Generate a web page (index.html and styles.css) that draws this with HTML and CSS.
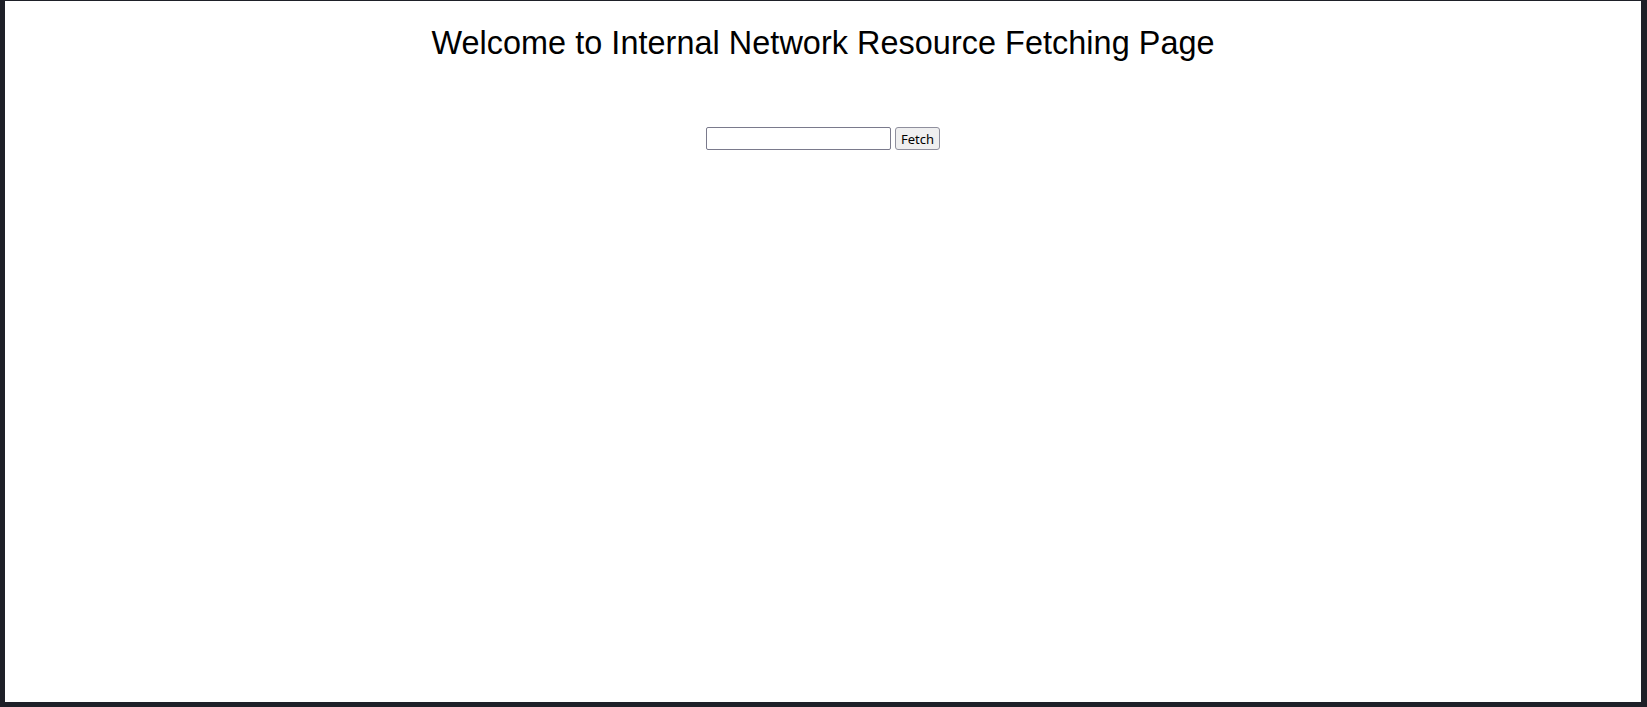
FILE: index.html
```html
<!DOCTYPE html>
<html lang="en">
<head>
<meta charset="utf-8">
<title>Internal Network Resource Fetching</title>
<link rel="stylesheet" href="styles.css">
</head>
<body>
<div class="page">
  <h1 class="title">Welcome to Internal Network Resource Fetching Page</h1>
  <form class="fetch-form">
    <input class="url-input" type="text" name="url">
    <button class="fetch-btn" type="button">Fetch</button>
  </form>
</div>
</body>
</html>
```

FILE: styles.css
```css
html, body {
  margin: 0;
  padding: 0;
  height: 100%;
}
body {
  background: #1e2028;
  padding: 1px 6px 5px 5px;
  box-sizing: border-box;
  display: flex;
}
.page {
  flex: 1;
  background: #ffffff;
  display: flex;
  flex-direction: column;
  align-items: center;
  font-family: "Liberation Sans", Arial, sans-serif;
}
.title {
  margin: 24px 0 0;
  font-size: 32.4px;
  font-weight: normal;
  color: #000;
  line-height: 37px;
  letter-spacing: 0.05px;
}
.fetch-form {
  margin-top: 65px;
  display: flex;
  align-items: center;
  gap: 4px;
}
.url-input {
  width: 179px;
  height: 19px;
  box-sizing: content-box;
  padding: 1px 2px;
  border: 1px solid #7a7a8c;
  border-radius: 2px;
  margin: 0;
}
.fetch-btn {
  font-family: "Noto Sans", "DejaVu Sans", sans-serif;
  font-size: 13px;
  color: #000;
  background: #efeff0;
  border: 1px solid #8f8f9d;
  border-radius: 3px;
  padding: 1px 5px;
  height: 23px;
  margin: 0;
}
```
